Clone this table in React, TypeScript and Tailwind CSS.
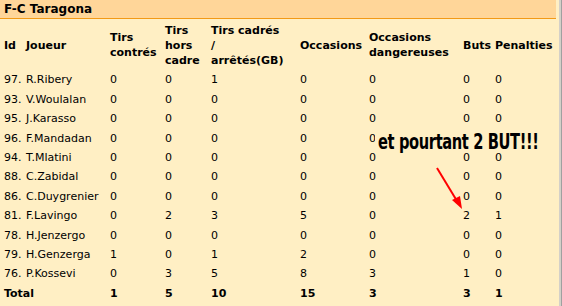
import React from "react";

const cols = "grid grid-cols-[22px_84px_55px_46px_89px_69px_94px_32px_61px]";

const rows: [string, string, string, string, string, string, string, string, string][] = [
  ["97.", "R.Ribery", "0", "0", "1", "0", "0", "0", "0"],
  ["93.", "V.Woulalan", "0", "0", "0", "0", "0", "0", "0"],
  ["95.", "J.Karasso", "0", "0", "0", "0", "0", "0", "0"],
  ["96.", "F.Mandadan", "0", "0", "0", "0", "0", "0", "0"],
  ["94.", "T.Mlatini", "0", "0", "0", "0", "0", "0", "0"],
  ["88.", "C.Zabidal", "0", "0", "0", "0", "0", "0", "0"],
  ["86.", "C.Duygrenier", "0", "0", "0", "0", "0", "0", "0"],
  ["81.", "F.Lavingo", "0", "2", "3", "5", "0", "2", "1"],
  ["78.", "H.Jenzergo", "0", "0", "0", "0", "0", "0", "0"],
  ["79.", "H.Genzerga", "1", "0", "1", "2", "0", "0", "0"],
  ["76.", "P.Kossevi", "0", "3", "5", "8", "3", "1", "0"],
];

export default function App() {
  return (
    <div
      className="relative w-[562px] h-[306px] bg-[#FFEFC4] text-black overflow-hidden flex"
      style={{ fontFamily: '"DejaVu Sans", Verdana, sans-serif' }}
    >
      <div className="w-[559px] flex flex-col">
        <div className="w-[556px] h-[18px] bg-[#FFD699] flex items-center pl-[4px] text-[12px] font-bold">
          F-C Taragona
        </div>
        <div className="w-[556px] h-px bg-[#F39A16]" />
        <div className="pl-[4px] text-[11px]">
          <div className={`${cols} h-[52px] items-center font-bold leading-[15px]`}>
            <div>Id</div>
            <div>Joueur</div>
            <div>
              Tirs
              <br />
              contrés
            </div>
            <div>
              Tirs
              <br />
              hors
              <br />
              cadre
            </div>
            <div>
              Tirs cadrés
              <br />/<br />
              arrêtés(GB)
            </div>
            <div>Occasions</div>
            <div>
              Occasions
              <br />
              dangereuses
            </div>
            <div>Buts</div>
            <div>Penalties</div>
          </div>
          {rows.map((r) => (
            <div key={r[0]} className={`${cols} h-[19.4px] items-center`}>
              {r.map((c, i) => (
                <div key={i} className="whitespace-nowrap">
                  {c}
                </div>
              ))}
            </div>
          ))}
          <div className={`${cols} h-[19.4px] items-center font-bold`}>
            <div className="col-span-2">Total</div>
            <div>1</div>
            <div>5</div>
            <div>10</div>
            <div>15</div>
            <div>3</div>
            <div>3</div>
            <div>1</div>
          </div>
        </div>
      </div>
      <div className="w-[3px] h-full bg-[#D4D0C8] border-r border-[#A0A0A0]" />

      <div className="absolute left-[375px] top-[131px] w-[166px] h-[22px] bg-[#FFEFC4] overflow-hidden">
        <div
          className="ml-[3px] whitespace-nowrap text-[22px] font-bold leading-[22px] tracking-[-0.5px] text-black origin-left scale-x-[0.74]"
          style={{ fontFamily: '"DejaVu Sans Condensed", "Liberation Sans Narrow", sans-serif' }}
        >
          et pourtant 2 BUT!!!
        </div>
      </div>
      <svg className="absolute left-0 top-0" width="562" height="306">
        <line x1="437" y1="168" x2="457" y2="201" stroke="#FF0000" strokeWidth="2" />
        <polygon points="462,209 452,200 460,196" fill="#FF0000" />
      </svg>
    </div>
  );
}
